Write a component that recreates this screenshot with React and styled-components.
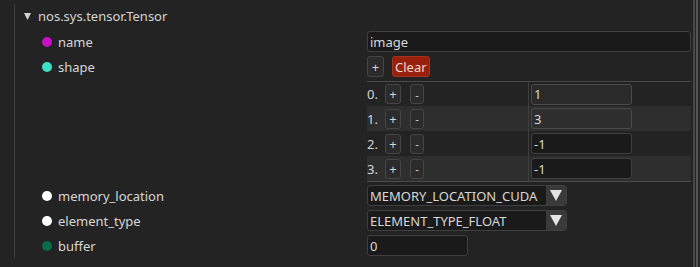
import React from 'react'
import styled, { createGlobalStyle } from 'styled-components'

const GlobalStyle = createGlobalStyle`
    body {
        margin: 0;
        background: #232323;
        font-family: "Noto Sans", "Open Sans", sans-serif;
        font-size: 13px;
        color: #d6d6d6;
        overflow: hidden;
    }
`

const Page = styled.div`
    display: flex;
    height: 267px;
    width: 700px;
`

const Main = styled.div`
    width: 693px;
    padding: 4px 0 0 14px;
    box-sizing: border-box;
`

const Scrollbar = styled.div`
    display: flex;
    width: 7px;
    background: #262626;
    span {
        width: 2px;
        background: #474747;
    }
    span + span {
        margin-left: 1px;
        background: #555555;
    }
`

const Tree = styled.div`
    border-left: 1px solid #3d3d3d;
    height: 254px;
`

const Header = styled.div`
    display: flex;
    align-items: center;
    height: 24px;
    padding-left: 9px;
    gap: 7px;
    color: #d4d4d4;
    svg {
        display: block;
    }
`

const Props = styled.div`
    display: flex;
    flex-direction: column;
    gap: 4px;
    margin-top: 3px;
`

const PropRow = styled.div`
    display: grid;
    grid-template-columns: 352px 324px;
    margin-bottom: ${p => p.$pull || 0}px;
`

const Label = styled.div`
    display: flex;
    align-items: center;
    gap: 6px;
    padding-left: 27px;
    height: 21px;
    &::before {
        content: '';
        width: 10px;
        height: 10px;
        border-radius: 50%;
        background: ${p => p.$dot};
    }
`

const Field = styled.div`
    box-sizing: border-box;
    width: ${p => p.$w}px;
    height: 21px;
    padding: 0 2px;
    display: flex;
    align-items: center;
    background: ${p => p.$bg || '#1a1a1a'};
    border: 1px solid ${p => p.$border || '#3f3f3f'};
    border-radius: 3px;
    color: #d8d8d8;
    white-space: nowrap;
`

const Controls = styled.div`
    display: flex;
    gap: 8px;
    align-items: center;
`

const Button = styled.div`
    box-sizing: border-box;
    height: ${p => p.$h || 21}px;
    min-width: ${p => p.$w || 16}px;
    padding: 0 2px;
    display: flex;
    align-items: center;
    justify-content: center;
    background: ${p => p.$danger ? '#99200c' : '#2b2b2b'};
    border: 1px solid ${p => p.$danger ? '#a8321c' : '#464646'};
    border-radius: 3px;
    color: ${p => p.$danger ? '#ecd6d0' : '#d6d6d6'};
    font-size: ${p => p.$small ? 11 : 13}px;
`

const Table = styled.div`
    border-top: 1px solid #4a4a4a;
    border-bottom: 1px solid #4a4a4a;
`

const TableRow = styled.div`
    display: grid;
    grid-template-columns: 161px 1px 1fr;
    height: 25px;
    background: ${p => p.$alt ? '#2e2e2e' : 'transparent'};
    &:first-child {
        height: 24px;
    }
`

const Divider = styled.div`
    background: #3e3e3e;
`

const IndexCell = styled.div`
    display: flex;
    align-items: center;
    gap: 0;
    span {
        width: 18px;
    }
    & > div + div {
        margin-left: 9px;
    }
`

const ValueCell = styled.div`
    display: flex;
    align-items: center;
    padding-left: 2px;
`

const Select = styled.div`
    box-sizing: border-box;
    width: 200px;
    height: 21px;
    display: flex;
    background: #1a1a1a;
    border: 1px solid #3f3f3f;
    border-radius: 3px;
    overflow: hidden;
    span {
        flex: 1;
        display: flex;
        align-items: center;
        padding-left: 2px;
        color: #d8d8d8;
    }
`

const Arrow = styled.div`
    width: 20px;
    background: #3a3a3a;
    display: flex;
    align-items: center;
    justify-content: center;
    &::after {
        content: '';
        border-left: 6px solid transparent;
        border-right: 6px solid transparent;
        border-top: 11px solid #e4e4e4;
    }
`

const rows = [
    { value: '1', bg: '#2a2a2a', border: '#4a4a4a' },
    { value: '3', bg: '#2e2e2e', border: '#4a4a4a' },
    { value: '-1' },
    { value: '-1' },
]

const App = () => {
    return (
        <>
            <GlobalStyle />
            <Page>
                <Main>
                    <Tree>
                        <Header>
                            <svg width="7" height="7" viewBox="0 0 7 7">
                                <polygon points="0,0 7,0 3.5,7" fill="#d4d4d4" />
                            </svg>
                            nos.sys.tensor.Tensor
                        </Header>
                        <Props>
                            <PropRow>
                                <Label $dot="#c512c5">name</Label>
                                <Field $w={324}>image</Field>
                            </PropRow>
                            <PropRow>
                                <Label $dot="#3ddfc5">shape</Label>
                                <Controls>
                                    <Button $w={17}>+</Button>
                                    <Button $danger>Clear</Button>
                                </Controls>
                            </PropRow>
                            <PropRow $pull={-1}>
                                <div />
                                <Table>
                                    {rows.map((r, i) => (
                                        <TableRow key={i} $alt={i % 2 === 1}>
                                            <IndexCell>
                                                <span>{i}.</span>
                                                <Button $h={20} $w={16}>+</Button>
                                                <Button $h={20} $w={14} $small>-</Button>
                                            </IndexCell>
                                            <Divider />
                                            <ValueCell>
                                                <Field $w={101} $bg={r.bg} $border={r.border}>
                                                    {r.value}
                                                </Field>
                                            </ValueCell>
                                        </TableRow>
                                    ))}
                                </Table>
                            </PropRow>
                            <PropRow>
                                <Label $dot="#ffffff">memory_location</Label>
                                <Select>
                                    <span>MEMORY_LOCATION_CUDA</span>
                                    <Arrow />
                                </Select>
                            </PropRow>
                            <PropRow>
                                <Label $dot="#ffffff">element_type</Label>
                                <Select>
                                    <span>ELEMENT_TYPE_FLOAT</span>
                                    <Arrow />
                                </Select>
                            </PropRow>
                            <PropRow>
                                <Label $dot="#066c4a">buffer</Label>
                                <Field $w={101}>0</Field>
                            </PropRow>
                        </Props>
                    </Tree>
                </Main>
                <Scrollbar>
                    <span />
                    <span />
                </Scrollbar>
            </Page>
        </>
    )
}

export default App
